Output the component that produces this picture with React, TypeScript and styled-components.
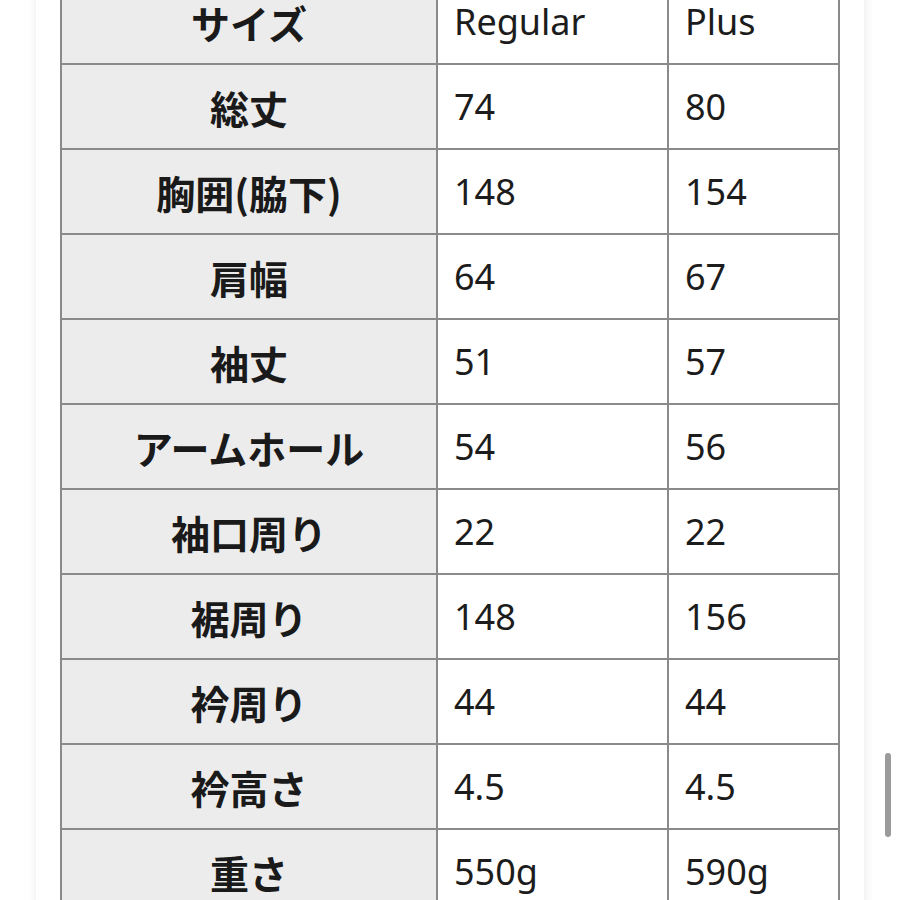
import React from 'react';
import styled, { createGlobalStyle } from 'styled-components';

const rows: [string, string, string][] = [
    ['サイズ', 'Regular', 'Plus'],
    ['総丈', '74', '80'],
    ['胸囲(脇下)', '148', '154'],
    ['肩幅', '64', '67'],
    ['袖丈', '51', '57'],
    ['アームホール', '54', '56'],
    ['袖口周り', '22', '22'],
    ['裾周り', '148', '156'],
    ['衿周り', '44', '44'],
    ['衿高さ', '4.5', '4.5'],
    ['重さ', '550g', '590g'],
];

const App: React.FC = () => (
    <>
        <GlobalStyle />
        <Page>
            <Panel>
                <SizeTable>
                    <colgroup>
                        <col style={{ width: 376 }} />
                        <col style={{ width: 231 }} />
                        <col style={{ width: 171 }} />
                    </colgroup>
                    <tbody>
                        {rows.map(([label, regular, plus]) => (
                            <tr key={label}>
                                <LabelCell>{label}</LabelCell>
                                <ValueCell>{regular}</ValueCell>
                                <ValueCell>{plus}</ValueCell>
                            </tr>
                        ))}
                    </tbody>
                </SizeTable>
            </Panel>
        </Page>
        <ScrollThumb />
    </>
);

export default App;

const GlobalStyle = createGlobalStyle`
    html, body {
        margin: 0;
        padding: 0;
        height: 900px;
        overflow: hidden;
        background: #ffffff;
    }
`;

const Page = styled.div`
    width: 900px;
    height: 900px;
    overflow: hidden;
    background: #ffffff;
`;

/* the page is scrolled a little, so the header row is cut at the top */
const Panel = styled.div`
    margin: -22px 36px 0;
    padding: 0 24px;
    background: #ffffff;
    box-shadow: -3px 0 6px rgba(0, 0, 0, 0.04), 3px 0 8px rgba(0, 0, 0, 0.06);
    min-height: 1000px;
`;

const SizeTable = styled.table`
    table-layout: fixed;
    width: 778px;
    border-collapse: collapse;
    font-family: 'Noto Sans', 'Noto Sans CJK JP', sans-serif;
    color: #1c1c1c;
`;

const Cell = styled.td`
    height: 85px;
    border: 2px solid #8a8a8a;
    padding: 0;
    box-sizing: border-box;
`;

const LabelCell = styled(Cell)`
    background: #ececec;
    text-align: center;
    font-family: 'Noto Sans CJK JP', sans-serif;
    font-weight: 700;
    font-size: 39px;
    color: #1a1a1a;
`;

const ValueCell = styled(Cell)`
    text-align: left;
    padding-left: 16px;
    font-size: 36px;
    font-weight: 400;
`;

const ScrollThumb = styled.div`
    position: fixed;
    left: 885px;
    top: 753px;
    width: 6px;
    height: 84px;
    border-radius: 3px;
    background: #9b9b9b;
`;
